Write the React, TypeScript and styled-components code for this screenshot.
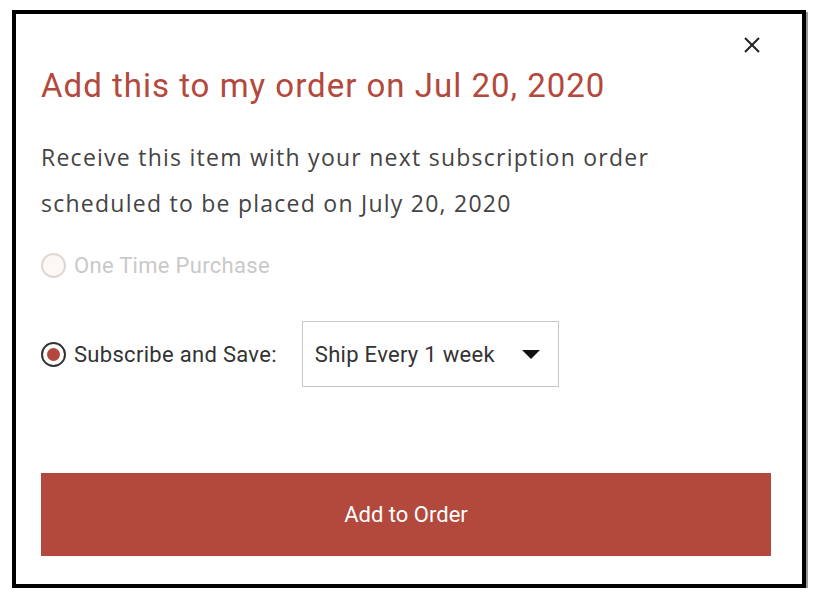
import React from 'react'
import styled, { createGlobalStyle } from 'styled-components'

const GlobalStyle = createGlobalStyle`
  html, body {
    margin: 0;
    padding: 0;
    background: #ffffff;
  }
`

const colors = {
  brand: '#b3483c',
  text: '#444444',
  muted: '#c9c9c9',
  border: '#c8c8c8',
}

const din = `Roboto, 'Liberation Sans', sans-serif`

const Frame = styled.div`
  box-sizing: border-box;
  margin: 10px 0 0 12px;
  width: 794px;
  height: 578px;
  border: 4px solid #000;
  box-shadow: 2px 2px 0 #9a9a9a;
  background: #fff;
  padding: 0 31px 0 25px;
  display: flex;
  flex-direction: column;
`

const CloseRow = styled.div`
  display: flex;
  justify-content: flex-end;
  padding: 22px 10px 0 0;
  height: 22px;
`

const CloseButton = styled.button`
  border: none;
  background: none;
  padding: 0;
  width: 18px;
  height: 18px;
  cursor: pointer;
  color: #222;
`

const Title = styled.h2`
  margin: 10px 0 0;
  font-family: ${din};
  font-weight: 400;
  font-size: 33px;
  letter-spacing: 1px;
  line-height: 36px;
  color: ${colors.brand};
`

const Description = styled.p`
  margin: 30px 0 0;
  font-family: 'Open Sans', Lato, sans-serif;
  font-size: 23px;
  letter-spacing: 1.25px;
  line-height: 46px;
  color: ${colors.text};
  max-width: 680px;
`

const Options = styled.div`
  margin-top: 19px;
  display: flex;
  flex-direction: column;
`

const OptionRow = styled.label<{ $disabled?: boolean }>`
  display: flex;
  align-items: center;
  gap: 8px;
  height: ${p => (p.$disabled ? '40px' : '66px')};
  margin-top: ${p => (p.$disabled ? '0' : '36px')};
  font-family: ${din};
  font-size: 22px;
  letter-spacing: 0.3px;
  color: ${p => (p.$disabled ? colors.muted : '#333')};
`

const Radio = styled.span<{ $checked?: boolean; $disabled?: boolean }>`
  box-sizing: border-box;
  width: 25px;
  height: 25px;
  border-radius: 50%;
  border: 2px solid ${p => (p.$disabled ? '#ddd6d2' : '#333')};
  background: ${p => (p.$disabled ? '#fdf8f6' : '#fff')};
  display: flex;
  align-items: center;
  justify-content: center;
  flex-shrink: 0;

  &::after {
    content: '';
    display: ${p => (p.$checked ? 'block' : 'none')};
    width: 13px;
    height: 13px;
    border-radius: 50%;
    background: ${colors.brand};
  }
`

const Select = styled.div`
  box-sizing: border-box;
  margin-left: 17px;
  width: 257px;
  height: 66px;
  border: 1px solid ${colors.border};
  display: flex;
  align-items: center;
  justify-content: space-between;
  padding: 0 18px 0 12px;
  color: #333;
  font-size: 22px;
  letter-spacing: 0.3px;
`

const Caret = styled.span`
  width: 0;
  height: 0;
  border-left: 9px solid transparent;
  border-right: 9px solid transparent;
  border-top: 9px solid #111;
`

const Spacer = styled.div`
  flex: 1;
`

const SubmitButton = styled.button`
  margin-bottom: 28px;
  height: 83px;
  width: 100%;
  border: none;
  background: ${colors.brand};
  color: #fff;
  font-family: ${din};
  font-size: 22px;
  cursor: pointer;
`

const App: React.FC = () => {
  return (
    <>
      <GlobalStyle />
      <Frame>
        <CloseRow>
          <CloseButton aria-label="Close">
            <svg width="18" height="18" viewBox="0 0 18 18">
              <path d="M2 2 L16 16 M16 2 L2 16" stroke="currentColor" strokeWidth="2" />
            </svg>
          </CloseButton>
        </CloseRow>
        <Title>Add this to my order on Jul 20, 2020</Title>
        <Description>
          Receive this item with your next subscription order
          <br />
          scheduled to be placed on July 20, 2020
        </Description>
        <Options>
          <OptionRow $disabled>
            <Radio $disabled />
            One Time Purchase
          </OptionRow>
          <OptionRow>
            <Radio $checked />
            Subscribe and Save:
            <Select>
              Ship Every 1 week
              <Caret />
            </Select>
          </OptionRow>
        </Options>
        <Spacer />
        <SubmitButton>Add to Order</SubmitButton>
      </Frame>
    </>
  )
}

export default App
